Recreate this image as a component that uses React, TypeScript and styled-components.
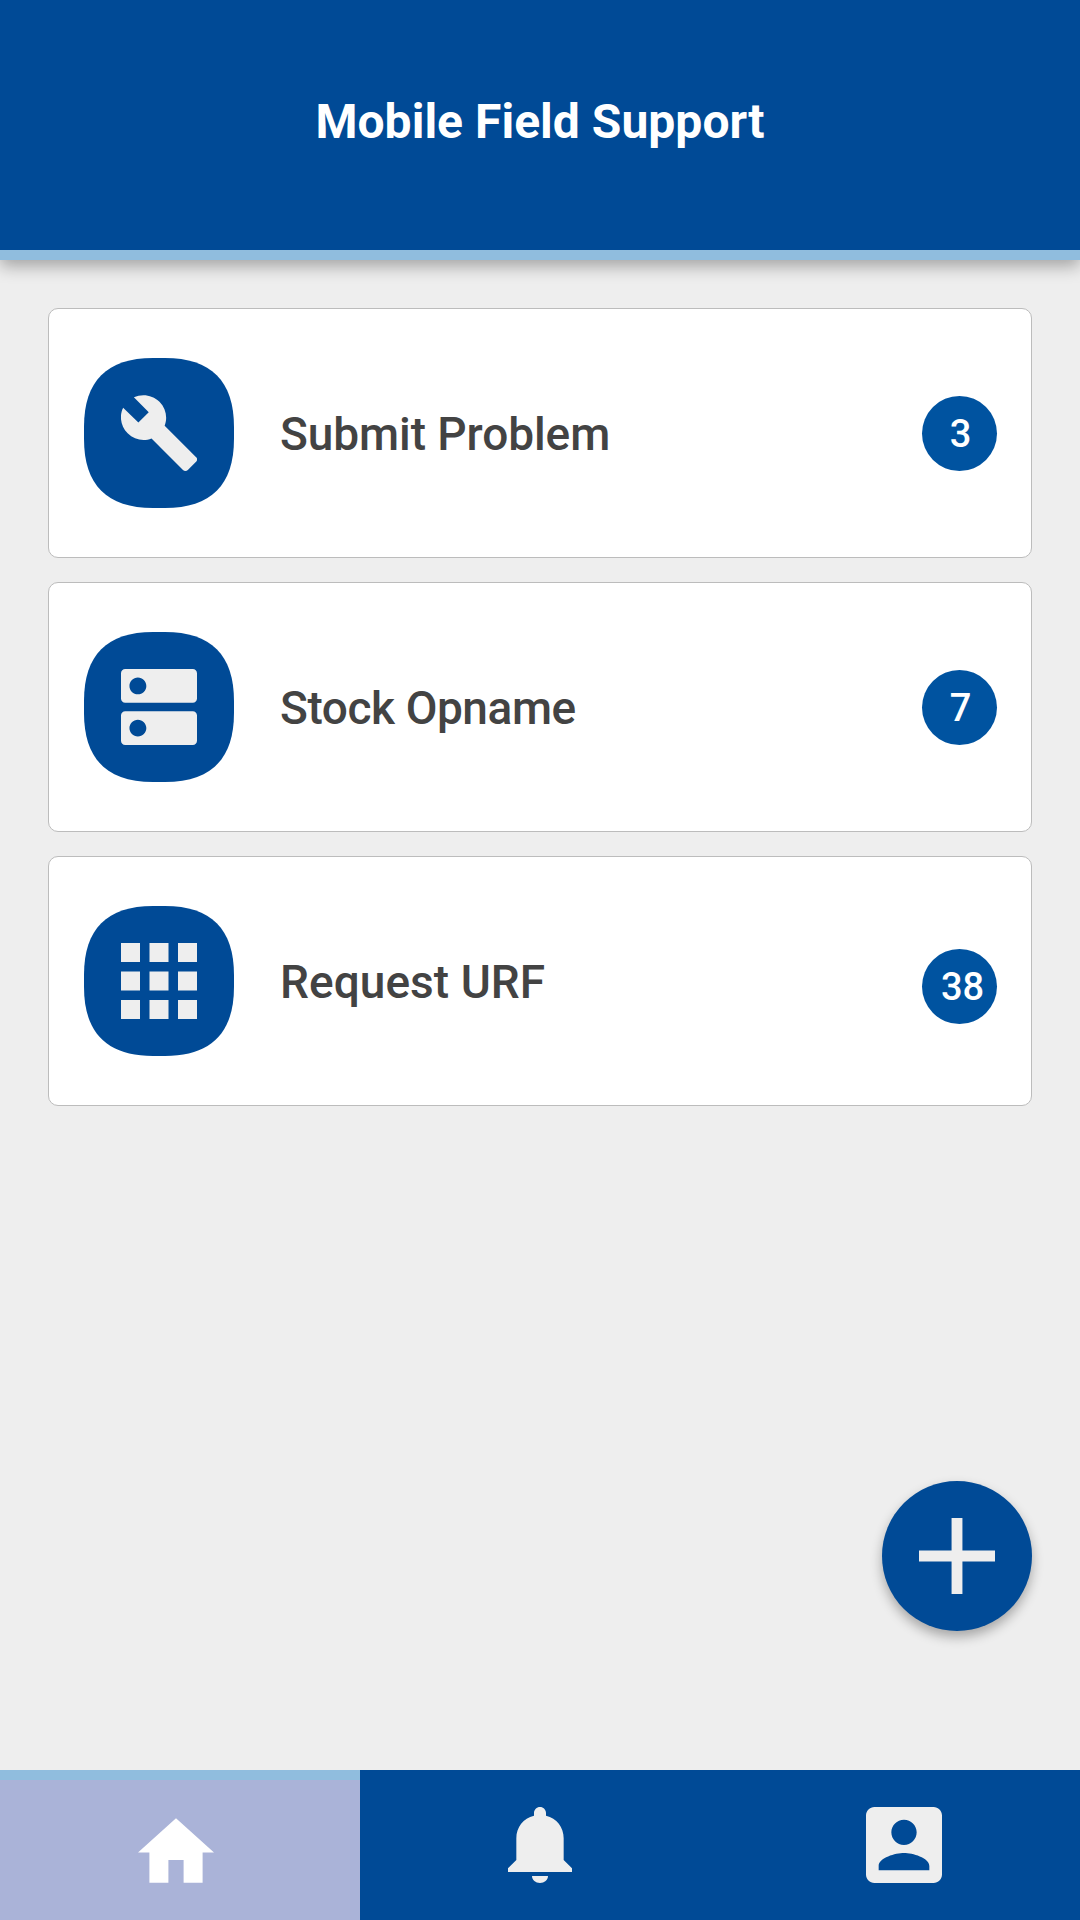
import React from "react";
import styled, { createGlobalStyle } from "styled-components";

const color = {
  primary: "#004a96",
  badge: "#0053a0",
  accent: "#90bdde",
  active: "#aab3d8",
  surface: "#eeeeee",
  text: "#434343",
};

const GlobalStyle = createGlobalStyle`
  *, *::before, *::after { box-sizing: border-box; }
  body { margin: 0; background: ${color.surface}; font-family: Roboto, "Liberation Sans", sans-serif; }
  button { border: 0; padding: 0; font: inherit; cursor: pointer; }
`;

const Screen = styled.div`
  width: 1080px;
  height: 1920px;
  display: flex;
  flex-direction: column;
  background: ${color.surface};
  overflow: hidden;
`;

const Header = styled.header`
  flex: none;
  height: 260px;
  display: flex;
  justify-content: center;
  padding-top: 94px;
  background: ${color.primary};
  border-bottom: 10px solid ${color.accent};
  box-shadow: 0 6px 16px rgba(0, 0, 0, 0.32);
`;

const Title = styled.h1`
  margin: 0;
  font-size: 48px;
  line-height: 56px;
  font-weight: 700;
  letter-spacing: 0.03px;
  color: #fff;
  white-space: nowrap;
`;

const Content = styled.main`
  flex: 1;
  display: flex;
  flex-direction: column;
  padding: 48px 48px 139px;
`;

const MenuList = styled.div`
  display: flex;
  flex-direction: column;
  gap: 24px;
`;

const Card = styled.section`
  height: 250px;
  display: flex;
  align-items: center;
  padding: 0 34px 0 35px;
  background: #fff;
  border: 1px solid #bcbcbc;
  border-radius: 10px;
`;

const IconTile = styled.div`
  flex: none;
  width: 150px;
  height: 150px;
  display: grid;
  place-items: center;
  color: ${color.surface};

  > * { grid-area: 1 / 1; }
`;

const Glyph = styled.svg<{ $w?: number; $h?: number }>`
  display: block;
  width: ${(p) => p.$w ?? 76}px;
  height: ${(p) => p.$h ?? 76}px;
  fill: currentColor;
`;

const Label = styled.span<{ $spacing: number }>`
  flex: 1;
  margin-left: 46px;
  padding-top: 1px;
  font-size: 46px;
  line-height: 56px;
  font-weight: 500;
  letter-spacing: ${(p) => p.$spacing}px;
  color: ${color.text};
  white-space: nowrap;
`;

const Badge = styled.span<{ $drop?: number; $indent?: number }>`
  flex: none;
  width: 75px;
  height: 75px;
  margin-top: ${(p) => (p.$drop ?? 0) * 2}px;
  padding-left: ${(p) => p.$indent ?? 2}px;
  padding-top: 2px;
  display: flex;
  align-items: center;
  justify-content: center;
  border-radius: 50%;
  background: ${color.badge};
  color: #fff;
  font-size: 38px;
  line-height: 1;
  font-weight: 500;
`;

const Fab = styled.button`
  width: 150px;
  height: 150px;
  margin: auto 0 0 auto;
  display: grid;
  place-items: center;
  border-radius: 50%;
  background: ${color.primary};
  color: ${color.surface};
  box-shadow: 0 6px 12px rgba(0, 0, 0, 0.3);
`;

const NavBar = styled.nav`
  flex: none;
  height: 150px;
  display: grid;
  grid-template-columns: repeat(3, 1fr);
`;

const Tab = styled.button<{ $active?: boolean; $shift?: number }>`
  display: flex;
  align-items: flex-end;
  justify-content: center;
  padding-bottom: 37px;
  padding-left: ${(p) => Math.max(0, (p.$shift ?? 0) * 2)}px;
  padding-right: ${(p) => Math.max(0, -(p.$shift ?? 0) * 2)}px;
  background: ${(p) => (p.$active ? color.active : color.primary)};
  border-top: 10px solid ${(p) => (p.$active ? color.accent : color.primary)};
  color: ${(p) => (p.$active ? "#fff" : color.surface)};
`;

const Squircle = () => (
  <Glyph $w={150} $h={150} viewBox="0 0 50 50" color={color.primary}>
    <path d="M23 0H27C42.333 0 50 7.667 50 23V27C50 42.333 42.333 50 27 50H23C7.667 50 0 42.333 0 27V23C0 7.667 7.667 0 23 0Z" />
  </Glyph>
);

const Wrench = () => (
  <Glyph viewBox="0.98 1.03 21.97 21.97">
    <path d="M22.7 19l-9.1-9.1c.9-2.3.4-5-1.5-6.9-2-2-5-2.4-7.4-1.3L9 6 6 9 1.6 4.7C.4 7.1.9 10.1 2.9 12.1c1.9 1.9 4.6 2.4 6.9 1.5l9.1 9.1c.4.4 1 .4 1.4 0l2.3-2.3c.5-.4.5-1.1.1-1.4z" />
  </Glyph>
);

const Servers = () => (
  <Glyph viewBox="3 3 18 18">
    <path d="M20 13H4c-.55 0-1 .45-1 1v6c0 .55.45 1 1 1h16c.55 0 1-.45 1-1v-6c0-.55-.45-1-1-1zM7 19c-1.1 0-2-.9-2-2s.9-2 2-2 2 .9 2 2-.9 2-2 2zM20 3H4c-.55 0-1 .45-1 1v6c0 .55.45 1 1 1h16c.55 0 1-.45 1-1V4c0-.55-.45-1-1-1zM7 9c-1.1 0-2-.9-2-2s.9-2 2-2 2 .9 2 2-.9 2-2 2z" />
  </Glyph>
);

const Apps = () => (
  <Glyph viewBox="4 4 16 16">
    <path d="M4 8h4V4H4v4zm6 12h4v-4h-4v4zm-6 0h4v-4H4v4zm0-6h4v-4H4v4zm6 0h4v-4h-4v4zm6-10v4h4V4h-4zm-6 4h4V4h-4v4zm6 6h4v-4h-4v4zm0 6h4v-4h-4v4z" />
  </Glyph>
);

const Plus = () => (
  <Glyph viewBox="5 5 14 14">
    <path d="M19 13h-6v6h-2v-6H5v-2h6V5h2v6h6v2z" />
  </Glyph>
);

const Home = () => (
  <Glyph $h={65} viewBox="2 3 20 17">
    <path d="M10 20v-6h4v6h5v-8h3L12 3 2 12h3v8z" />
  </Glyph>
);

const Bell = () => (
  <Glyph $w={64} viewBox="0 0 192 228">
    <path d="M96 0C106 0 114 8 114 18V26C146 34 167 60 167 94V159L192 184V195H0V184L25 159V94C25 60 46 34 78 26V18C78 8 86 0 96 0ZM72 207H120C120 219 109 228 96 228S72 219 72 207Z" />
  </Glyph>
);

const Account = () => (
  <Glyph viewBox="3 3 18 18">
    <path d="M3 5v14c0 1.1.89 2 2 2h14c1.1 0 2-.9 2-2V5c0-1.1-.9-2-2-2H5c-1.11 0-2 .9-2 2zm12 4c0 1.66-1.34 3-3 3s-3-1.34-3-3 1.34-3 3-3 3 1.34 3 3zm-9 8c0-2 4-3.1 6-3.1s6 1.1 6 3.1v1H6v-1z" />
  </Glyph>
);

const items = [
  { label: "Submit Problem", count: 3, Icon: Wrench, spacing: -0.08 },
  { label: "Stock Opname", count: 7, Icon: Servers, spacing: -0.42 },
  { label: "Request URF", count: 38, Icon: Apps, spacing: 0.05, drop: 5, indent: 6 },
];

export default function App() {
  return (
    <Screen>
      <GlobalStyle />
      <Header>
        <Title>Mobile Field Support</Title>
      </Header>
      <Content>
        <MenuList>
          {items.map(({ label, count, Icon, spacing, drop, indent }) => (
            <Card key={label}>
              <IconTile>
                <Squircle />
                <Icon />
              </IconTile>
              <Label $spacing={spacing}>{label}</Label>
              <Badge $drop={drop} $indent={indent}>{count}</Badge>
            </Card>
          ))}
        </MenuList>
        <Fab aria-label="Add">
          <Plus />
        </Fab>
      </Content>
      <NavBar>
        <Tab $active $shift={-4} aria-label="Home"><Home /></Tab>
        <Tab aria-label="Notifications"><Bell /></Tab>
        <Tab $shift={4} aria-label="Account"><Account /></Tab>
      </NavBar>
    </Screen>
  );
}
